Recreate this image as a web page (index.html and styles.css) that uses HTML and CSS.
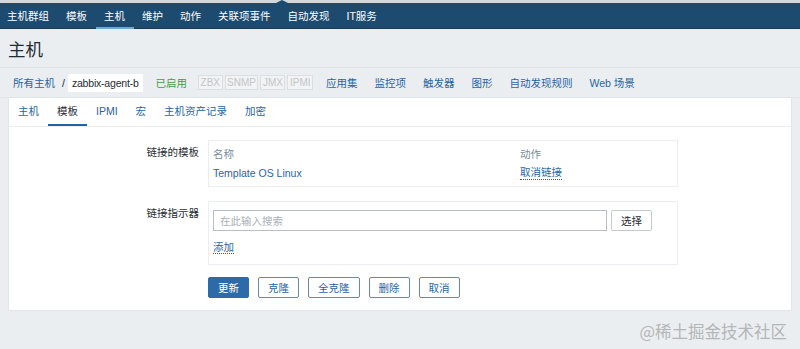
FILE: index.html
```html
<html lang="zh-CN">
<head>
    <meta charset="UTF-8">
    <meta name="viewport" content="width=device-width, initial-scale=1.0">
    <title>主机</title>
    <link rel="stylesheet" href="styles.css">
</head>
<body>
    <div class="top-strip"><span class="notch"></span></div>

    <nav class="main-nav">
        <a href="#">主机群组</a>
        <a href="#">模板</a>
        <a href="#" class="active">主机</a>
        <a href="#">维护</a>
        <a href="#">动作</a>
        <a href="#">关联项事件</a>
        <a href="#">自动发现</a>
        <a href="#">IT服务</a>
    </nav>

    <div class="header">
        <h1>主机</h1>
    </div>

    <div class="breadcrumbs">
        <a href="#" class="crumb">所有主机</a>
        <span class="sep">/</span>
        <span class="current">zabbix-agent-b</span>
        <span class="status">已启用</span>
        <span class="tags">
            <span class="tag">ZBX</span>
            <span class="tag">SNMP</span>
            <span class="tag">JMX</span>
            <span class="tag">IPMI</span>
        </span>
        <a href="#">应用集</a>
        <a href="#">监控项</a>
        <a href="#">触发器</a>
        <a href="#">图形</a>
        <a href="#">自动发现规则</a>
        <a href="#">Web 场景</a>
    </div>

    <div class="panel">
        <div class="tabs">
            <a href="#">主机</a>
            <a href="#" class="active">模板</a>
            <a href="#">IPMI</a>
            <a href="#">宏</a>
            <a href="#">主机资产记录</a>
            <a href="#">加密</a>
        </div>

        <div class="form">
            <div class="label">链接的模板</div>
            <div class="box">
                <div class="table-row head">
                    <span class="col-name">名称</span>
                    <span>动作</span>
                </div>
                <div class="table-row">
                    <a href="#" class="col-name">Template OS Linux</a>
                    <a href="#" class="dotted">取消链接</a>
                </div>
            </div>

            <div class="label">链接指示器</div>
            <div class="box box-link">
                <div class="search-row">
                    <input type="text" class="search" placeholder="在此输入搜索">
                    <button class="btn-plain">选择</button>
                </div>
                <a href="#" class="dotted add">添加</a>
            </div>

            <div></div>
            <div class="actions">
                <button class="btn btn-primary">更新</button>
                <button class="btn">克隆</button>
                <button class="btn">全克隆</button>
                <button class="btn">删除</button>
                <button class="btn">取消</button>
            </div>
        </div>
    </div>

    <div class="footer">
        <span class="watermark">@稀土掘金技术社区</span>
    </div>
</body>
</html>
```

FILE: styles.css
```css
body {
    font-family: "Liberation Sans", "Noto Sans CJK SC", sans-serif;
    font-size: 10.5px;
    margin: 0;
    padding: 0;
    background-color: #ebeef0;
    color: #1f2c33;
}

a {
    color: #1f65a6;
    text-decoration: none;
}

.top-strip {
    height: 3px;
    background: #d4d8db;
    position: relative;
}

.notch {
    position: absolute;
    left: 276px;
    top: 0;
    width: 0;
    height: 0;
    border-left: 6px solid transparent;
    border-right: 6px solid transparent;
    border-bottom: 3px solid #1d4a6f;
}

.main-nav {
    display: flex;
    height: 26px;
    align-items: center;
    background: #1d4a6f;
    border-bottom: 1px solid #16395a;
    box-sizing: border-box;
}

.main-nav a {
    color: #fff;
    padding: 0 8.5px;
    height: 26px;
    line-height: 26px;
    box-sizing: border-box;
}

.main-nav a:first-child {
    padding-left: 7px;
}

.main-nav a.active {
    box-shadow: inset 0 -2px 0 #6fa8dc;
}

.header {
    height: 38px;
    padding: 0 8px;
    border-bottom: 1px solid #e2e5e7;
    display: flex;
    align-items: center;
}

.header h1 {
    margin: 0;
    font-size: 17.5px;
    font-weight: normal;
    color: #1f2c33;
}

.breadcrumbs {
    display: flex;
    align-items: center;
    height: 29px;
    padding: 0 13px;
    border-bottom: 1px solid #e2e5e7;
}

.breadcrumbs a {
    margin-right: 17px;
}

.breadcrumbs .crumb {
    margin-right: 0;
}

.sep {
    margin: 0 3px 0 7px;
    color: #1f2c33;
}

.current {
    background: #fff;
    padding: 3px 4px;
    margin-right: 13px;
    letter-spacing: -0.2px;
}

.status {
    color: #429e47;
    margin-right: 11px;
}

.tags {
    display: flex;
    gap: 2px;
    margin-right: 13px;
}

.tag {
    border: 1px solid #dcdfe1;
    background: #f2f3f4;
    color: #c2c5c8;
    padding: 0 1.5px;
    font-size: 10px;
    line-height: 13px;
}

.panel {
    margin: 0 8px;
    background: #fff;
    border: 1px solid #e4e7e9;
    border-top: none;
    padding-bottom: 12px;
}

.tabs {
    display: flex;
    height: 28px;
    border-bottom: 1px solid #ebeef0;
}

.tabs a {
    padding: 0 9px;
    line-height: 27px;
    box-sizing: border-box;
}

.tabs a.active {
    color: #1f2c33;
    box-shadow: inset 0 -2px 0 #1f65a6;
}

.form {
    display: grid;
    grid-template-columns: 190px 470px;
    column-gap: 9px;
    row-gap: 14px;
    padding-top: 13px;
}

.label {
    text-align: right;
    padding-top: 4px;
    color: #1f2c33;
}

.box {
    border: 1px solid #ebeef0;
    padding: 3px 4px 4px;
}

.table-row {
    display: flex;
    height: 19px;
    align-items: center;
}

.table-row.head {
    color: #768d99;
}

.col-name {
    width: 307px;
}

.dotted {
    border-bottom: 1px dotted #1f65a6;
    line-height: 13px;
}

.box-link {
    padding: 8px 4px 10px;
}

.search-row {
    display: flex;
    gap: 4px;
    margin-bottom: 10px;
}

.search {
    width: 394px;
    height: 21px;
    box-sizing: border-box;
    border: 1px solid #b8bec2;
    padding: 0 6px;
    font-family: inherit;
    font-size: 10.5px;
}

.search::placeholder {
    color: #a9b0b5;
}

.btn-plain {
    width: 41px;
    height: 21px;
    border: 1px solid #c4c9cc;
    background: #fff;
    border-radius: 2px;
    font-family: inherit;
    font-size: 10.5px;
    color: #1f2c33;
}

.actions {
    display: flex;
    gap: 9px;
    margin-top: -2px;
}

.btn {
    height: 21px;
    padding: 0 9px;
    border: 1px solid #6a89a5;
    border-radius: 2px;
    background: #fff;
    color: #1f65a6;
    font-family: inherit;
    font-size: 10.5px;
}

.btn-primary {
    background: #2c6aa8;
    border-color: #2c6aa8;
    color: #fff;
}

.footer {
    display: flex;
    justify-content: flex-end;
    padding: 8px 13px 0;
}

.watermark {
    font-family: "Noto Sans CJK SC", sans-serif;
    font-size: 16.5px;
    color: #b3b6b9;
}
```
